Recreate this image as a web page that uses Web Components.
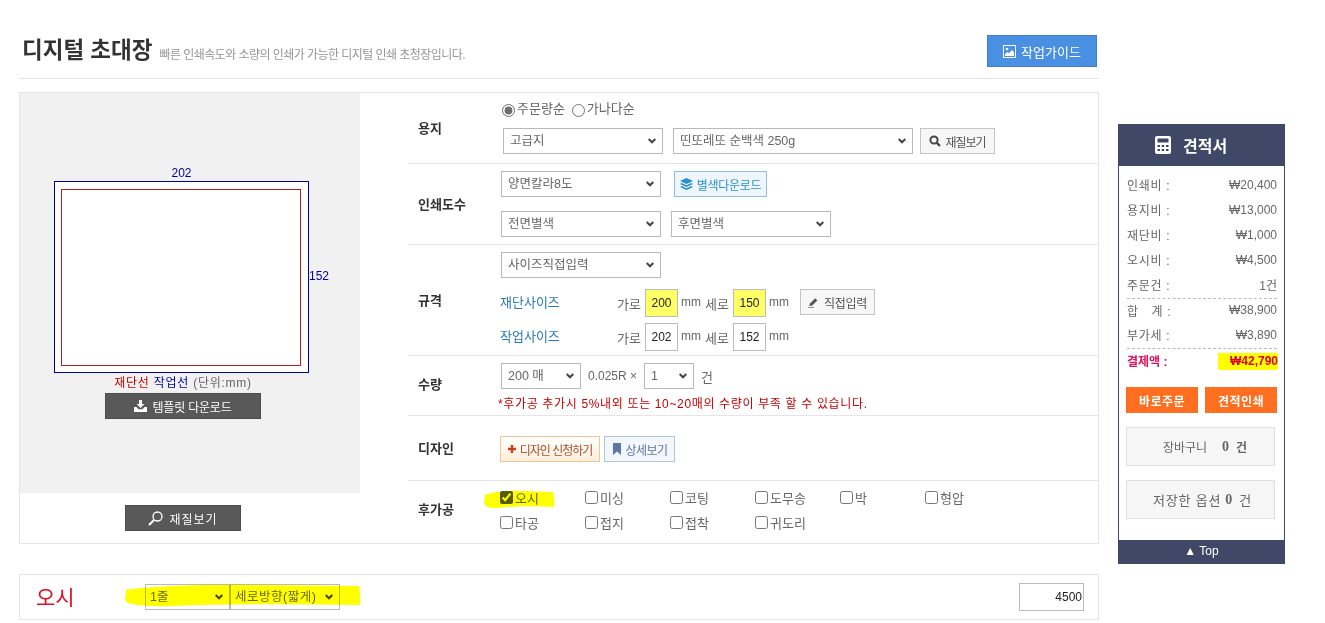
<!DOCTYPE html>
<html lang="ko">
<head>
<meta charset="utf-8">
<title>디지털 초대장</title>
<style>
  html, body { margin: 0; background: #fff; }
  body { font: 13px "Liberation Sans", "Noto Sans CJK KR", sans-serif; color: #555; }
</style>
</head>
<body>
<order-page>
  <page-heading title-text="디지털 초대장" note="빠른 인쇄속도와 소량의 인쇄가 가능한 디지털 인쇄 초청장입니다."></page-heading>
  <option-card>
    <template-preview slot="preview"></template-preview>

    <option-row label="용지" style="--row-h:70px;--row-pad:9px;--row-gap:10px">
      <div style="display:flex;align-items:center;height:16px;font-size:13px;margin-top:-1px;margin-left:1px">
        <radio-pick checked>주문량순</radio-pick><radio-pick>가나다순</radio-pick>
      </div>
      <div style="display:flex;gap:10px;margin-left:2px;margin-top:1px">
        <pick-box width="160">고급지</pick-box>
        <pick-box width="240">띤또레또 순백색 250g</pick-box>
        <tool-button icon="search" style="margin-left:-3px;width:75px;--ls:-1px">재질보기</tool-button>
      </div>
    </option-row>

    <option-row label="인쇄도수" style="--row-h:80px;--row-pad:7px;--row-gap:14px">
      <div style="display:flex;gap:13px">
        <pick-box width="160">양면칼라8도</pick-box>
        <tool-button icon="layers" tone="blue" style="width:93px">별색다운로드</tool-button>
      </div>
      <div style="display:flex;gap:10px">
        <pick-box width="160">전면별색</pick-box>
        <pick-box width="160">후면별색</pick-box>
      </div>
    </option-row>

    <option-row label="규격" style="--row-h:110px;--row-pad:7px;--row-gap:11px">
      <pick-box width="160">사이즈직접입력</pick-box>
      <size-line name="재단사이즈" w="200" h="150" marked>
        <tool-button icon="pencil" style="width:75px;margin-left:7px;align-self:flex-start">직접입력</tool-button>
      </size-line>
      <size-line name="작업사이즈" w="202" h="152" style="margin-top:-5px"></size-line>
    </option-row>

    <option-row label="수량" style="--row-h:59px;--row-pad:7px;--row-gap:6px;--label-shift:-2px">
      <div style="display:flex;align-items:center;color:#666;font-size:12px">
        <pick-box width="80">200 매</pick-box>
        <span style="margin:0 7px">0.025R ×</span>
        <pick-box width="50">1</pick-box>
        <span style="margin-left:7px;font-size:13px">건</span>
      </div>
      <div style="font-size:12px;color:#c80000;margin:1px 0 0 -3px;line-height:16px;letter-spacing:.65px;white-space:nowrap">*후가공 추가시 5%내외 또는 10~20매의 수량이 부족 할 수 있습니다.</div>
    </option-row>

    <option-row label="디자인" style="--row-h:64px;--row-pad:20px">
      <div style="display:flex;gap:4px;margin-left:-1px">
        <tool-button icon="plus" tone="peach" style="width:100px;--ls:-1px">디자인 신청하기</tool-button>
        <tool-button icon="bookmark" tone="slate" style="width:71px;--ls:-.6px">상세보기</tool-button>
      </div>
    </option-row>

    <option-row label="후가공" style="--row-h:62px;--row-pad:4px;--label-shift:-4px">
      <finish-grid>
        <check-pick checked>오시</check-pick>
        <check-pick>미싱</check-pick>
        <check-pick>코팅</check-pick>
        <check-pick>도무송</check-pick>
        <check-pick>박</check-pick>
        <check-pick>형압</check-pick>
        <check-pick>타공</check-pick>
        <check-pick>접지</check-pick>
        <check-pick>접착</check-pick>
        <check-pick>귀도리</check-pick>
      </finish-grid>
      <marker-stroke style="left:76px;top:9px" width="71" height="19"></marker-stroke>
    </option-row>
  </option-card>

  <finish-card name="오시" price="4500">
    <pick-box width="85" flat>1줄</pick-box>
    <pick-box width="110" flat style="--ls:.5px">세로방향(짧게)</pick-box>
  </finish-card>

  <estimate-panel slot="side"></estimate-panel>
</order-page>

<script>
const fontStack = '"Liberation Sans", "Noto Sans CJK KR", sans-serif';

const icons = {
  search: '<svg width="12" height="12" viewBox="0 0 12 12"><circle cx="5" cy="5" r="3.6" fill="none" stroke="#444" stroke-width="2"/><path d="M7.6 7.6 11 11" stroke="#444" stroke-width="2.2"/></svg>',
  layers: '<svg width="13" height="12" viewBox="0 0 13 12"><path d="M6.5 0 13 3 6.5 6 0 3z" fill="#2b8fd0"/><path d="M1.8 5 6.5 7.2 11.2 5 13 5.9 6.5 9 0 5.9z" fill="#2b8fd0"/><path d="M1.8 8 6.5 10.2 11.2 8 13 8.9 6.5 12 0 8.9z" fill="#2b8fd0"/></svg>',
  pencil: '<svg width="12" height="12" viewBox="0 0 12 12"><path d="M2 7.4 7.2 2.2 9.4 4.4 4.2 9.6 1.4 10z" fill="#555"/><path d="M0 11.4h6" stroke="#888"/></svg>',
  plus: '<svg width="8" height="8" viewBox="0 0 10 10"><path d="M3.5 0h3v3.5H10v3H6.500V10h-3V6.500H0v-3h3.500z" fill="#c8401a"/></svg>',
  bookmark: '<svg width="10" height="12" viewBox="0 0 10 12"><path d="M1 0h8v12L5 8.600 1 12z" fill="#5f77a5"/></svg>',
  download: '<svg width="13" height="12" viewBox="0 0 13 12"><path d="M5 0h3v4h2.400L6.500 8 2.600 4H5z" fill="#fff"/><path d="M0 7h2.500l2 2.200h4l2-2.200H13v5H0z" fill="#fff"/></svg>',
  loupe: '<svg width="15" height="15" viewBox="0 0 15 15"><circle cx="9.500" cy="5.500" r="4.500" fill="none" stroke="#fff" stroke-width="1.300"/><path d="M6 9 1 14" stroke="#fff" stroke-width="2.200"/></svg>',
  picture: '<svg width="13" height="13" viewBox="0 0 13 13"><rect x=".5" y=".5" width="12" height="12" fill="none" stroke="#fff"/><circle cx="4" cy="4" r="1.300" fill="#fff"/><path d="M2 11V9l2.500-2 1.500 1.200L9 5l2 2.500V11z" fill="#fff"/></svg>',
  calculator: '<svg width="16" height="18" viewBox="0 0 16 18"><rect width="16" height="18" rx="2" fill="#fff"/><rect x="2.500" y="2.500" width="11" height="4" fill="#3f4867"/><g fill="#3f4867"><rect x="2.500" y="9" width="2.500" height="2"/><rect x="6.700" y="9" width="2.500" height="2"/><rect x="11" y="9" width="2.500" height="2"/><rect x="2.500" y="13" width="2.500" height="2"/><rect x="6.700" y="13" width="2.500" height="2"/><rect x="11" y="13" width="2.500" height="2"/></g></svg>'
};

function shadow(host, html) {
  const root = host.attachShadow({ mode: 'open' });
  root.innerHTML = html;
  return root;
}

class OrderPage extends HTMLElement {
  connectedCallback() {
    if (this.shadowRoot) return;
    shadow(this, `
      <style>
        :host { display: flex; align-items: flex-start; padding-left: 19px; font-family: ${fontStack}; }
        main { width: 1080px; flex: none; }
        aside { margin: 124px 0 0 19px; width: 167px; flex: none; }
      </style>
      <main><slot></slot></main>
      <aside><slot name="side"></slot></aside>`);
  }
}

class PageHeading extends HTMLElement {
  connectedCallback() {
    if (this.shadowRoot) return;
    shadow(this, `
      <style>
        :host { display: block; box-sizing: border-box; height: 79px; padding: 35px 2px 0 3px; border-bottom: 1px solid #e4e4e4; margin-bottom: 13px; }
        .bar { display: flex; align-items: flex-start; }
        h1 { margin: 1px 0 0; font-size: 22.500px; line-height: 30px; font-weight: 700; color: #333; white-space: nowrap; }
        small { margin: 12px 0 0 7px; font-size: 12px; line-height: 16px; color: #969696; letter-spacing: -.55px; white-space: nowrap; }
        a { margin-left: auto; box-sizing: border-box; width: 110px; height: 32px; display: flex; align-items: center; justify-content: center; gap: 5px; background: #4a90e2; border: 1px solid #3f7fc8; color: #fff; font-size: 13px; }
      </style>
      <div class="bar">
        <h1>${this.getAttribute('title-text')}</h1>
        <small>${this.getAttribute('note')}</small>
        <a>${icons.picture}<span>작업가이드</span></a>
      </div>`);
  }
}

class OptionCard extends HTMLElement {
  connectedCallback() {
    if (this.shadowRoot) return;
    shadow(this, `
      <style>
        :host { display: grid; grid-template-columns: 340px 1fr; column-gap: 48px; height: 452px; box-sizing: border-box; border: 1px solid #e5e5e5; }
        .rows { display: flex; flex-direction: column; }
      </style>
      <div><slot name="preview"></slot></div>
      <div class="rows"><slot></slot></div>`);
  }
}

class TemplatePreview extends HTMLElement {
  connectedCallback() {
    if (this.shadowRoot) return;
    shadow(this, `
      <style>
        :host { display: block; }
        .sheet { box-sizing: border-box; height: 400px; background: #f1f1f1; padding-top: 88px; display: flex; flex-direction: column; }
        .paper { position: relative; box-sizing: border-box; width: 255px; height: 192px; margin-left: 34px; padding: 7px 7px 6px 6px; border: 1px solid #00009c; background: #fff; }
        .cut { box-sizing: border-box; height: 100%; border: 1px solid #b51d1d; }
        .paper span { position: absolute; color: #00009c; font-size: 12px; line-height: 14px; }
        .top { left: 0; right: 0; top: -16px; text-align: center; }
        .side { left: 254px; top: 87px; }
        .legend { margin: 2px 0 0 0; width: 326px; text-align: center; font-size: 12px; line-height: 17px; color: #666; letter-spacing: .75px; }
        .legend b { font-weight: 400; }
        a { box-sizing: border-box; display: flex; align-items: center; justify-content: center; height: 26px; background: #595959; border: 1px solid #4d4d4d; color: #fff; font-size: 12px; }
        .tpl { width: 156px; margin: 1px 0 0 85px; gap: 5px; letter-spacing: -.2px; }
        .mat { width: 116px; margin: 12px 0 0 105px; gap: 6px; letter-spacing: 1px; }
      </style>
      <div class="sheet">
        <div class="paper"><span class="top">202</span><span class="side">152</span><div class="cut"></div></div>
        <div class="legend"><b style="color:#c00000">재단선</b> <b style="color:#00009c">작업선</b> (단위:mm)</div>
        <a class="tpl">${icons.download}<span>템플릿 다운로드</span></a>
      </div>
      <a class="mat">${icons.loupe}<span>재질보기</span></a>`);
  }
}

class OptionRow extends HTMLElement {
  connectedCallback() {
    if (this.shadowRoot) return;
    shadow(this, `
      <style>
        :host { display: flex; position: relative; flex: none; box-sizing: content-box; height: var(--row-h); border-bottom: 1px solid #e5e5e5; padding-left: 10px; }
        :host(:last-child) { border-bottom: 0; }
        .name { position: relative; top: var(--label-shift, -1px); width: 83px; flex: none; align-self: center; font-size: 13px; font-weight: 700; color: #333; }
        .body { display: flex; flex-direction: column; align-items: flex-start; gap: var(--row-gap, 0); padding-top: var(--row-pad); }
      </style>
      <div class="name">${this.getAttribute('label')}</div>
      <div class="body"><slot></slot></div>`);
  }
}

class PickBox extends HTMLElement {
  connectedCallback() {
    if (this.shadowRoot) return;
    const flat = this.hasAttribute('flat');
    shadow(this, `
      <style>
        :host { display: inline-block; position: relative; flex: none; width: ${this.getAttribute('width')}px; height: 26px; }
        select { appearance: none; box-sizing: border-box; width: 100%; height: 100%; padding: 0 18px 0 ${flat ? 4 : 6}px; border: 1px solid #b9b9b9; border-radius: 0; background: ${flat ? 'transparent' : '#fff'}; color: #666; letter-spacing: var(--ls, 0); font: 12.500px ${fontStack}; }
        svg { position: absolute; right: 7px; top: 10px; pointer-events: none; }
      </style>
      <select><option>${this.textContent.trim()}</option></select>
      <svg width="8" height="6" viewBox="0 0 8 6"><path d="M.7 1 4 4.300 7.300 1" fill="none" stroke="#444" stroke-width="2"/></svg>`);
  }
}

class ToolButton extends HTMLElement {
  connectedCallback() {
    if (this.shadowRoot) return;
    shadow(this, `
      <style>
        :host { display: inline-flex; flex: none; box-sizing: border-box; height: 26px; align-items: center; justify-content: center; gap: 4px; font-size: 12px; white-space: nowrap; border: 1px solid #c4c4c4; background: #f6f6f6; color: #555; letter-spacing: var(--ls, -.3px); }
        :host([tone="blue"]) { background: #eef6fc; border-color: #8dbfe6; color: #2b8fd0; }
        :host([tone="peach"]) { background: linear-gradient(#fff, #fdeeda); border-color: #edc79a; color: #a5502d; }
        :host([tone="slate"]) { background: #f3f7fb; border-color: #b3c4d6; color: #5f77a5; }
      </style>
      ${icons[this.getAttribute('icon')]}<slot></slot>`);
  }
}

class RadioPick extends HTMLElement {
  connectedCallback() {
    if (this.shadowRoot) return;
    shadow(this, `
      <style>
        :host { display: inline-flex; align-items: center; margin-right: 7px; color: #666; }
        input { margin: 2px 2px 0 0; width: 13px; height: 13px; accent-color: #6e6e6e; }
        span { position: relative; top: -2px; }
      </style>
      <input type="radio" name="order" ${this.hasAttribute('checked') ? 'checked' : ''}><span><slot></slot></span>`);
  }
}

class SizeLine extends HTMLElement {
  connectedCallback() {
    if (this.shadowRoot) return;
    const fill = this.hasAttribute('marked') ? '#ffff66' : '#fff';
    const cell = (value) => `<input value="${value}" style="background:${fill}">`;
    shadow(this, `
      <style>
        :host { display: flex; align-items: center; height: 28px; font-size: 13px; color: #666; }
        b { font-weight: 400; width: 117px; margin: -3px 0 0 -1px; color: #2a78b8; }
        input { box-sizing: border-box; width: 33px; height: 28px; margin: 0 3px 0 3px; padding: 0; border: 1px solid #bbb; text-align: center; color: #222; font: 12px ${fontStack}; }
        .unit { font-size: 12px; width: 24px; margin-top: -3px; }
        i { font-style: normal; }
      </style>
      <b>${this.getAttribute('name')}</b>
      <i style="width:25px">가로</i>${cell(this.getAttribute('w'))}<span class="unit">mm</span>
      <i style="width:25px">세로</i>${cell(this.getAttribute('h'))}<span class="unit">mm</span>
      <slot></slot>`);
  }
}

class FinishGrid extends HTMLElement {
  connectedCallback() {
    if (this.shadowRoot) return;
    shadow(this, `
      <style>
        :host { display: grid; grid-template-columns: repeat(6, 85px); grid-auto-rows: 25px; margin-left: -1px; position: relative; z-index: 0; }
      </style>
      <slot></slot>`);
  }
}

class CheckPick extends HTMLElement {
  connectedCallback() {
    if (this.shadowRoot) return;
    shadow(this, `
      <style>
        :host { display: flex; align-items: center; font-size: 13px; color: #666; }
        input { margin: 0 2px 0 0; width: 13px; height: 13px; accent-color: #5a5a5a; }
      </style>
      <input type="checkbox" ${this.hasAttribute('checked') ? 'checked' : ''}><slot></slot>`);
  }
}

// highlighter scribble laid over the content
class MarkerStroke extends HTMLElement {
  connectedCallback() {
    if (this.shadowRoot) return;
    const w = Number(this.getAttribute('width'));
    const h = Number(this.getAttribute('height'));
    shadow(this, `
      <style>
        :host { position: absolute; display: block; width: ${w}px; height: ${h}px; mix-blend-mode: multiply; pointer-events: none; z-index: 2; }
        svg { display: block; }
      </style>
      <svg width="${w}" height="${h}" viewBox="0 0 ${w} ${h}"><path d="M1 ${h * .25} Q${w * .2} 0 ${w * .55} 1 L${w - 2} 2 Q${w} ${h * .5} ${w - 1} ${h - 2} Q${w * .5} ${h - 4} ${w * .2} ${h - 1} Q2 ${h} 0 ${h * .7} Z" fill="#ffff00"/></svg>`);
  }
}

class FinishCard extends HTMLElement {
  connectedCallback() {
    if (this.shadowRoot) return;
    shadow(this, `
      <style>
        :host { display: flex; position: relative; align-items: center; box-sizing: border-box; height: 46px; margin-top: 30px; padding: 0 14px 0 16px; border: 1px solid #e5e5e5; }
        strong { width: 109px; margin-top: -3px; font-weight: 400; font-size: 21px; color: #e0102a; }
        .picks { display: flex; }
        input { box-sizing: border-box; width: 65px; height: 28px; margin-left: auto; padding: 0 1px 0 0; border: 1px solid #bbb; text-align: right; color: #222; font: 12px ${fontStack}; }
        marker-stroke { left: 105px; top: 9px; }
      </style>
      <strong>${this.getAttribute('name')}</strong>
      <div class="picks"><slot></slot></div>
      <input value="${this.getAttribute('price')}">
      <marker-stroke width="236" height="23"></marker-stroke>`);
  }
}

const estimateLines = [
  ['인쇄비 :', '₩20,400'],
  ['용지비 :', '₩13,000'],
  ['재단비 :', '₩1,000'],
  ['오시비 :', '₩4,500'],
  ['주문건 :', '1건'],
  ['합　계 :', '₩38,900', true],
  ['부가세 :', '₩3,890']
];

class EstimatePanel extends HTMLElement {
  connectedCallback() {
    if (this.shadowRoot) return;
    const rows = estimateLines.map(([name, value, ruled]) =>
      `<div class="line${ruled ? ' ruled' : ''}"><span class="key">${name}</span><span>${value}</span></div>`).join('');
    shadow(this, `
      <style>
        :host { display: flex; flex-direction: column; box-sizing: border-box; width: 167px; height: 440px; border: solid #3f4867; border-width: 0 1px; color: #666; font-size: 12px; }
        header { height: 42px; margin: 0 -1px; padding-left: 37px; background: #3f4867; color: #fff; display: flex; align-items: center; gap: 12px; font-size: 16px; font-weight: 700; flex: none; }
        .list { padding: 7px 7px 0 8px; flex: none; }
        .line { box-sizing: border-box; height: 25px; padding-bottom: 2px; display: flex; align-items: center; justify-content: space-between; }
        .key { letter-spacing: .7px; }
        .ruled, .total { border-top: 1px dashed #bbb; }
        .total { font-weight: 700; color: #e0105a; }
        .total em { font-style: normal; background: #ffff00; color: #e0002a; height: 17px; line-height: 17px; width: 60px; text-align: right; margin: 2px -1px 0 0; }
        .buy { display: flex; gap: 7px; margin: 14px 0 0 7px; flex: none; }
        .buy a { width: 72px; height: 26px; background: #ff6f1f; color: #fff; font-weight: 700; letter-spacing: .5px; display: flex; align-items: center; justify-content: center; }
        .box { box-sizing: border-box; width: 149px; height: 39px; margin: 14px 0 0 7px; padding-left: 4px; background: #f6f6f6; border: 1px solid #e0e0e0; display: flex; align-items: center; justify-content: center; font-size: 13px; letter-spacing: .8px; flex: none; }
        .box b { margin: 0 6px 0 4px; font: 700 14px "Liberation Serif", serif; }
        .cart { padding-left: 9px; font-size: 12px; letter-spacing: 0; }
        .cart b { margin: 0 7px 0 15px; }
        footer { margin: auto -1px 0; height: 24px; padding-bottom: 2px; box-sizing: border-box; background: #3f4867; color: #fff; font-size: 12px; display: flex; align-items: center; justify-content: center; flex: none; }
      </style>
      <header>${icons.calculator}<span>견적서</span></header>
      <div class="list">${rows}<div class="line total"><span>결제액 :</span><em>₩42,790</em></div></div>
      <div class="buy"><a>바로주문</a><a>견적인쇄</a></div>
      <div class="box cart">장바구니<b>0</b><strong>건</strong></div>
      <div class="box">저장한 옵션<b>0</b>건</div>
      <footer>▲ Top</footer>`);
  }
}

const elements = {
  'order-page': OrderPage,
  'page-heading': PageHeading,
  'option-card': OptionCard,
  'template-preview': TemplatePreview,
  'option-row': OptionRow,
  'pick-box': PickBox,
  'tool-button': ToolButton,
  'radio-pick': RadioPick,
  'size-line': SizeLine,
  'finish-grid': FinishGrid,
  'check-pick': CheckPick,
  'marker-stroke': MarkerStroke,
  'finish-card': FinishCard,
  'estimate-panel': EstimatePanel
};
Object.entries(elements).forEach(([name, element]) => customElements.define(name, element));
</script>
</body>
</html>
